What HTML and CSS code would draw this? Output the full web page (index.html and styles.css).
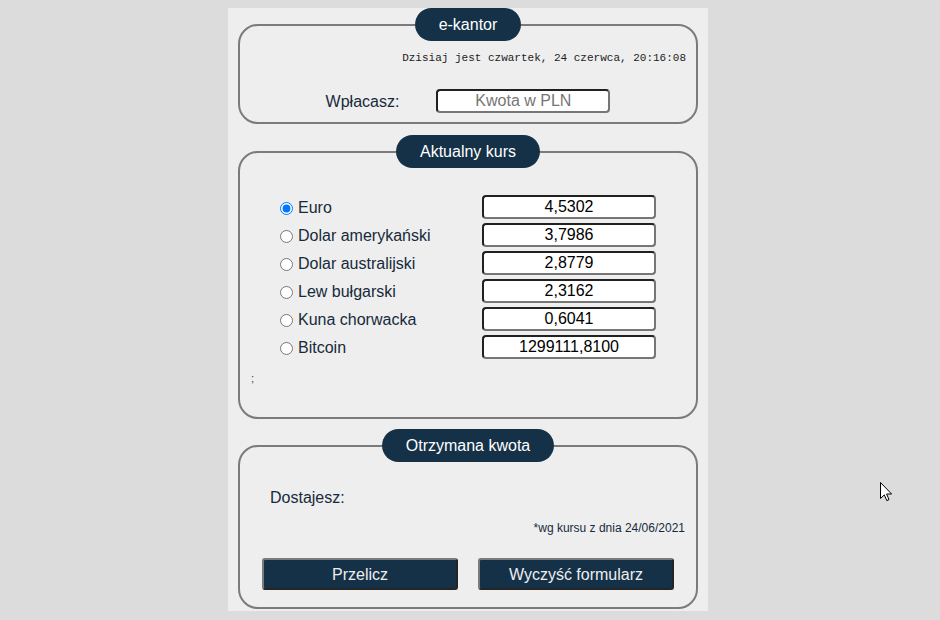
FILE: index.html
```html
<!DOCTYPE html>
<html lang="pl">
<head>
<meta charset="utf-8">
<title>e-kantor</title>
<link rel="stylesheet" href="styles.css">
</head>
<body>
<main class="kantor">
  <fieldset class="box box-top">
    <legend class="pill">e-kantor</legend>
    <div class="date">Dzisiaj jest czwartek, 24 czerwca, 20:16:08</div>
    <div class="pay-row">
      <label class="label" for="kwota">Wpłacasz:</label>
      <input class="field" id="kwota" type="text" placeholder="Kwota w PLN">
    </div>
  </fieldset>

  <fieldset class="box box-rates">
    <legend class="pill">Aktualny kurs</legend>
    <div class="rates">
      <label class="rate-name"><input type="radio" name="waluta" checked><span>Euro</span></label>
      <input class="field" type="text" value="4,5302" readonly>
      <label class="rate-name"><input type="radio" name="waluta"><span>Dolar amerykański</span></label>
      <input class="field" type="text" value="3,7986" readonly>
      <label class="rate-name"><input type="radio" name="waluta"><span>Dolar australijski</span></label>
      <input class="field" type="text" value="2,8779" readonly>
      <label class="rate-name"><input type="radio" name="waluta"><span>Lew bułgarski</span></label>
      <input class="field" type="text" value="2,3162" readonly>
      <label class="rate-name"><input type="radio" name="waluta"><span>Kuna chorwacka</span></label>
      <input class="field" type="text" value="0,6041" readonly>
      <label class="rate-name"><input type="radio" name="waluta"><span>Bitcoin</span></label>
      <input class="field" type="text" value="1299111,8100" readonly>
    </div>
    <div class="semi">;</div>
  </fieldset>

  <fieldset class="box box-result">
    <legend class="pill">Otrzymana kwota</legend>
    <div class="label result">Dostajesz:</div>
    <div class="note">*wg kursu z dnia 24/06/2021</div>
    <div class="buttons">
      <button class="btn" type="button">Przelicz</button>
      <button class="btn" type="button">Wyczyść formularz</button>
    </div>
  </fieldset>
</main>

<svg class="cursor" width="13" height="20" viewBox="0 0 13 20" aria-hidden="true">
  <path d="M0.5 0.5 L0.5 16.5 L4.3 12.9 L6.8 18.6 L9 17.6 L6.6 12 L11.6 12 Z" fill="#fff" stroke="#000" stroke-width="1" stroke-linejoin="miter"/>
</svg>
</body>
</html>
```

FILE: styles.css
```css
html, body {
  background: #dcdcdc;
}

body {
  margin: 8px;
  font-family: "Liberation Sans", Arial, sans-serif;
  font-size: 16px;
  color: #172a3b;
}

.kantor {
  width: 460px;
  margin-left: 220px;
  padding: 0 10px 2px;
  background: #eeeeee;
}

.box {
  margin: 0;
  min-width: 0;
  border: 2px solid #7b7b7b;
  border-radius: 20px;
  padding: 0 10px;
}

.pill {
  margin: 0 auto;
  padding: 7px 24px;
  line-height: 19px;
  background: #153147;
  color: #ffffff;
  border-radius: 17px;
  font-size: 16px;
}

/* first box */
.date {
  margin-top: 10px;
  text-align: right;
  font-family: "Liberation Mono", "DejaVu Sans Mono", monospace;
  font-size: 11px;
  line-height: 15px;
  color: #222;
}

.pay-row {
  display: flex;
  justify-content: center;
  align-items: center;
  gap: 37px;
  margin-top: 23px;
  padding-bottom: 9px;
}

.label {
  line-height: 19px;
}

.field {
  box-sizing: border-box;
  width: 174px;
  height: 24px;
  margin: 0;
  padding: 0 4px;
  border: 2px inset #767676;
  border-radius: 4px;
  background: #ffffff;
  font-family: "Liberation Sans", Arial, sans-serif;
  font-size: 16px;
  text-align: center;
  color: #000;
  outline: none;
}

.field::placeholder {
  color: #767676;
}

/* rates box */
.box-rates {
  margin-top: 11px;
}

.rates {
  display: grid;
  grid-template-columns: 202px 174px;
  row-gap: 4px;
  margin-top: 27px;
  padding-left: 30px;
  align-items: center;
}

.rate-name {
  display: flex;
  align-items: center;
  line-height: 19px;
  padding-top: 1px;
}

.rate-name input {
  width: 13px;
  height: 13px;
  margin: 1px 0 0 0;
}

.rate-name span {
  margin-left: 5px;
}

.semi {
  margin-top: 12px;
  padding-left: 1px;
  padding-bottom: 31px;
  font-size: 11px;
  line-height: 15px;
  color: #1c3f63;
}

/* result box */
.box-result {
  margin-top: 10px;
  padding: 0 11px;
}

.result {
  margin-top: 26px;
  padding-left: 19px;
}

.note {
  margin-top: 14px;
  text-align: right;
  font-size: 12px;
  line-height: 14px;
  color: #172a3b;
}

.buttons {
  display: flex;
  justify-content: center;
  gap: 20px;
  margin-top: 23px;
  padding-bottom: 17px;
}

.btn {
  box-sizing: border-box;
  width: 196px;
  height: 32px;
  margin: 0;
  border: 2px outset #7a7a7a;
  border-radius: 3px;
  background: #153147;
  color: #eeeeee;
  font-family: "Liberation Sans", Arial, sans-serif;
  font-size: 16px;
  line-height: 19px;
  padding: 0;
}

.cursor {
  position: absolute;
  left: 880px;
  top: 482px;
}
```
